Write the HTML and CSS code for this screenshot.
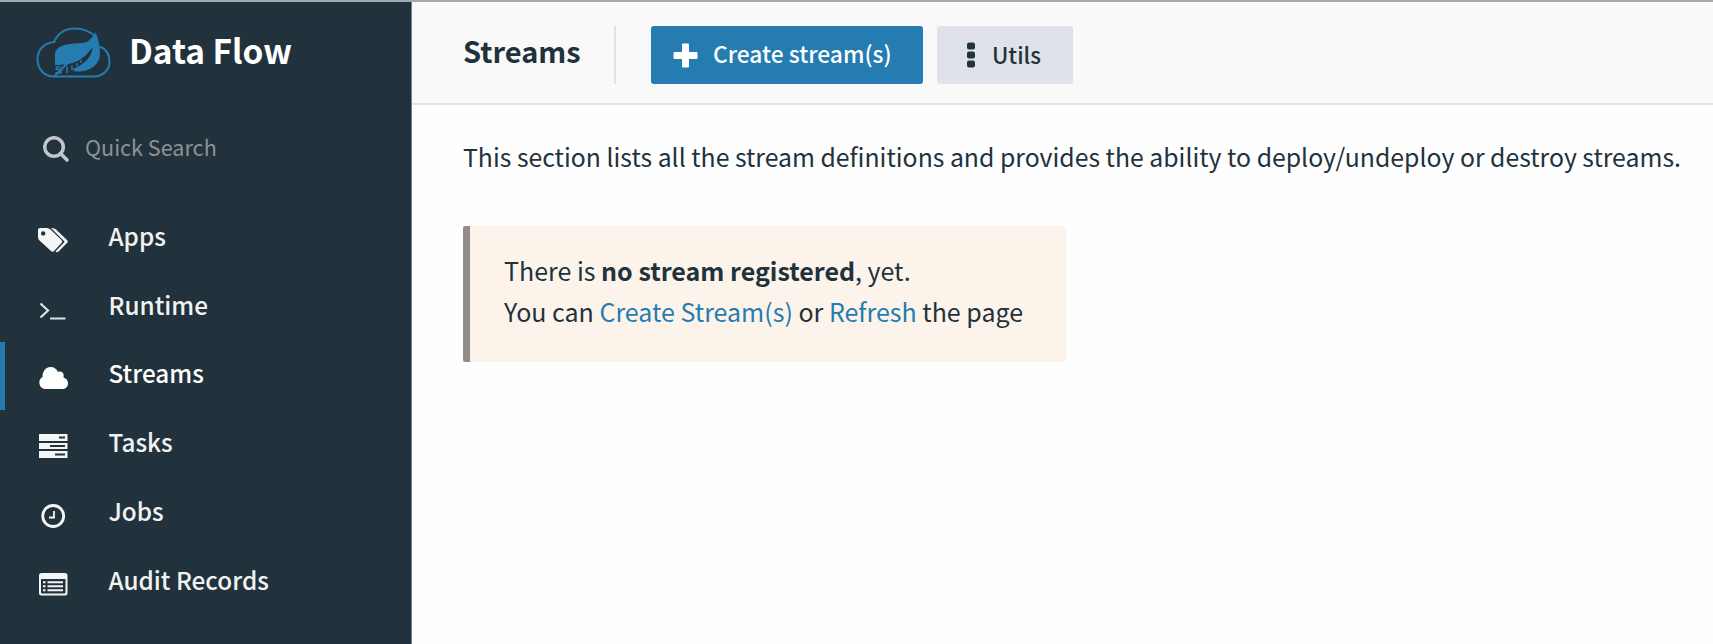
FILE: index.html
```html
<!DOCTYPE html>
<html lang="en">
<head>
<meta charset="utf-8">
<title>Data Flow</title>
<link rel="stylesheet" href="styles.css">
</head>
<body>
<div class="app">
  <aside class="sidebar">
    <div class="brand">
      <svg class="logo" viewBox="0 0 76 52">
        <path class="logo-cloud" d="M18 49.500H57C67 49.500 73.500 43 73.500 35C73.500 27 70 22 64 19.500M59 9C53 4 47 1.500 39 1.500C30 1.500 22 6 18 15C8 16 1.500 23 1.500 32C1.500 42 8 49.500 18 49.500Z"/>
        <path class="logo-leaf" d="M59.500 5C58 11 54 15 46 16C34 17 19 17 19 28V38C31 38 43 36 51 27C53 24.500 55 22 56.500 20.500C56 29 49 37 39 41C36 42 36 43 40 44.500C51 45 60 41 63.500 31C65 22 63 14 59.500 5Z"/>
        <path class="logo-detail" d="M25 40H20.500V42.500H25V46H19.500M31 39.500V46M36 38.500V43M41 36V39M45 33V36"/>
      </svg>
      <span class="brand-name">Data Flow</span>
    </div>
    <div class="search">
      <svg class="search-icon" viewBox="0 0 26 26"><circle cx="11" cy="11" r="9.300"/><path d="M17.500 17.500L24 24"/></svg>
      <span class="search-text">Quick Search</span>
    </div>
    <nav class="menu">
      <a class="item">
        <svg class="icon" viewBox="0 0 30 26"><path fill-rule="evenodd" d="M0 3Q0 1 2 1H9Q11 1 12.500 2.500L23.500 13Q25 14.500 23.500 16L16 24Q14.500 25.500 13 24L1.500 13.500Q0 12 0 10ZM5.200 4.200A2.200 2.200 0 1 0 5.200 8.600A2.200 2.200 0 1 0 5.200 4.200Z"/><path d="M13 1C15 1 16.500 1.500 18 2.500L29 13Q30.500 14.500 29 16L20.500 24.500Q19 26 17.500 24.500L26 15.500Q26.700 14.700 26 14Z"/></svg>
        <span class="label">Apps</span>
      </a>
      <a class="item">
        <svg class="icon line" viewBox="0 0 30 26"><path d="M2.500 7.500L10 14.500L2.500 21.500M12 22.500H27.500"/></svg>
        <span class="label">Runtime</span>
      </a>
      <a class="item active">
        <svg class="icon" viewBox="0 0 30 26"><path d="M7 24A6.500 6.500 0 0 1 4.500 12C4.500 6 8 2 12.500 2C16 2 19 4 20 7C23.500 5.500 26.500 8 25.500 12.500C28.500 13.500 30 15.500 30 18.500C30 22 27.500 24 24 24Z"/></svg>
        <span class="label">Streams</span>
      </a>
      <a class="item">
        <svg class="icon raised" viewBox="0 0 30 26"><path fill-rule="evenodd" d="M1 1H29.500V8H1ZM21 3.500V5.500H27V3.500ZM1 10H29.500V16H1ZM12 12V14H27V12ZM1 18H29.500V25H1ZM17 20.500V22.500H27V20.500Z"/></svg>
        <span class="label">Tasks</span>
      </a>
      <a class="item">
        <svg class="icon clock" viewBox="0 0 30 26"><circle cx="15.200" cy="13" r="10.500"/><path d="M16 8V14.500H11"/></svg>
        <span class="label">Jobs</span>
      </a>
      <a class="item">
        <svg class="icon" viewBox="0 0 30 26"><path fill-rule="evenodd" d="M3.500 2H27Q29.500 2 29.500 4.500V22Q29.500 24.500 27 24.500H3.500Q1 24.500 1 22V4.500Q1 2 3.500 2ZM3 8V21.500Q3 22.500 4 22.500H26.500Q27.500 22.500 27.500 21.500V8Z"/><path d="M5 10.200H7.500V12.200H5ZM9.500 10.200H25V12.200H9.500ZM5 14.200H7.500V16.200H5ZM9.500 14.200H25V16.200H9.500ZM5 18.200H7.500V20.200H5ZM9.500 18.200H25V20.200H9.500Z"/></svg>
        <span class="label">Audit Records</span>
      </a>
    </nav>
  </aside>
  <main class="main">
    <header class="header">
      <h1 class="title">Streams</h1>
      <span class="divider"></span>
      <button class="button primary">
        <svg class="plus" viewBox="0 0 25 25"><path d="M10 0.500H15Q16 0.500 16 1.500V9H23.500Q24.500 9 24.500 10V15Q24.500 16 23.500 16H16V23.500Q16 24.500 15 24.500H10Q9 24.500 9 23.500V16H1.500Q0.500 16 0.500 15V10Q0.500 9 1.500 9H9V1.500Q9 0.500 10 0.500Z"/></svg>
        <span class="button-label">Create stream(s)</span>
      </button>
      <button class="button secondary">
        <svg class="dots" viewBox="0 0 8 26"><rect width="8" height="7" y="0.500" rx="2"/><rect width="8" height="7" y="9.500" rx="2"/><rect width="8" height="7" y="18.500" rx="2"/></svg>
        <span class="button-label">Utils</span>
      </button>
    </header>
    <section class="content">
      <p class="description">This section lists all the stream definitions and provides the ability to deploy/undeploy or destroy streams.</p>
      <div class="notice">
        <p class="notice-line">There is <strong>no stream registered</strong>, yet.</p>
        <p class="notice-line">You can <a class="link">Create Stream(s)</a> or <a class="link">Refresh</a> the page</p>
      </div>
    </section>
  </main>
</div>
</body>
</html>
```
FILE: styles.css
```css
* { box-sizing: border-box; }
body {
  margin: 0;
  font-family: "Noto Sans CJK SC", "Noto Sans", sans-serif;
  font-size: 25px;
  color: #22323c;
  background: #fefefe;
}
p, h1 { margin: 0; }
svg { display: block; flex: none; }
.app { display: flex; height: 644px; border-top: 2px solid #a4abb0; overflow: hidden; }
.sidebar { flex: none; width: 412px; background: #22323c; color: #fff; border-right: 1px solid #77838b; }
.brand { display: flex; height: 102px; padding: 25px 0 0 36px; }
.logo { width: 76px; height: 52px; }
.logo-cloud { fill: none; stroke: #247cb0; stroke-width: 2; }
.logo-leaf { fill: #247cb0; }
.logo-detail { fill: none; stroke: #247cb0; stroke-width: 1.5; }
.brand-name { margin-left: 17px; font-size: 33.4px; font-weight: 700; line-height: 45px; white-space: nowrap; }
.search { display: flex; align-items: center; height: 90px; padding-left: 43px; }
.search-icon { width: 26px; height: 26px; fill: none; stroke: #c0c5c8; stroke-width: 3.5; stroke-linecap: round; }
.search-text { margin-left: 16px; padding-bottom: 4px; font-size: 21.6px; line-height: 34px; color: #8f9192; }
.menu { padding-top: 10px; }
.item { display: flex; align-items: center; height: 68.8px; padding-left: 38px; }
.item.active { padding-left: 33px; border-left: 5px solid #247cb0; }
.icon { width: 30px; height: 26px; margin-top: 4px; fill: #f4f5f5; }
.icon.raised { margin-top: 2px; }
.icon.line { fill: none; stroke: #dfe2e3; stroke-width: 2.2; }
.icon.clock { fill: none; stroke: #f4f5f5; stroke-width: 2.8; }
.icon.clock path { stroke-width: 1.8; }
.active .icon { fill: #fff; }
.label { margin-left: 40.5px; padding-bottom: 5px; font-size: 24.3px; font-weight: 500; line-height: 38px; color: #f0f2f3; }
.active .label { color: #fff; }
.main { flex: 1; min-width: 0; }
.header { display: flex; height: 103px; padding: 24px 0 0 51px; background: #f9f9f9; border-bottom: 2px solid #dfe2e8; }
.title { width: 151px; font-size: 29px; font-weight: 700; line-height: 49px; }
.divider { width: 2px; height: 58px; margin-right: 35px; background: #e2e3e5; }
.button { display: flex; align-items: center; height: 58px; padding: 0; border: 0; border-radius: 3px; font: inherit; font-weight: 500; font-size: 22.8px; }
.primary { width: 272px; margin-right: 14px; padding-left: 22px; background: #247cb0; color: #fff; }
.secondary { width: 136px; padding-left: 30px; background: #dfe2e8; color: #22323c; }
.plus { width: 25px; height: 25px; fill: #fff; }
.dots { width: 8px; height: 26px; fill: #22323c; }
.button-label { margin-left: 15px; padding-bottom: 2px; line-height: 36px; white-space: nowrap; }
.secondary .button-label { margin-left: 17px; font-size: 22.3px; }
.content { padding: 31px 0 0 51px; }
.description { font-size: 24.8px; line-height: 40px; white-space: nowrap; }
.notice { width: 603px; height: 136px; margin-top: 50px; padding: 24px 0 0 34px; border-left: 7px solid #8f8c8a; border-radius: 2px; background: #fcf4ea; }
.notice-line { line-height: 41px; white-space: nowrap; }
.link { color: #247cb0; }
```
